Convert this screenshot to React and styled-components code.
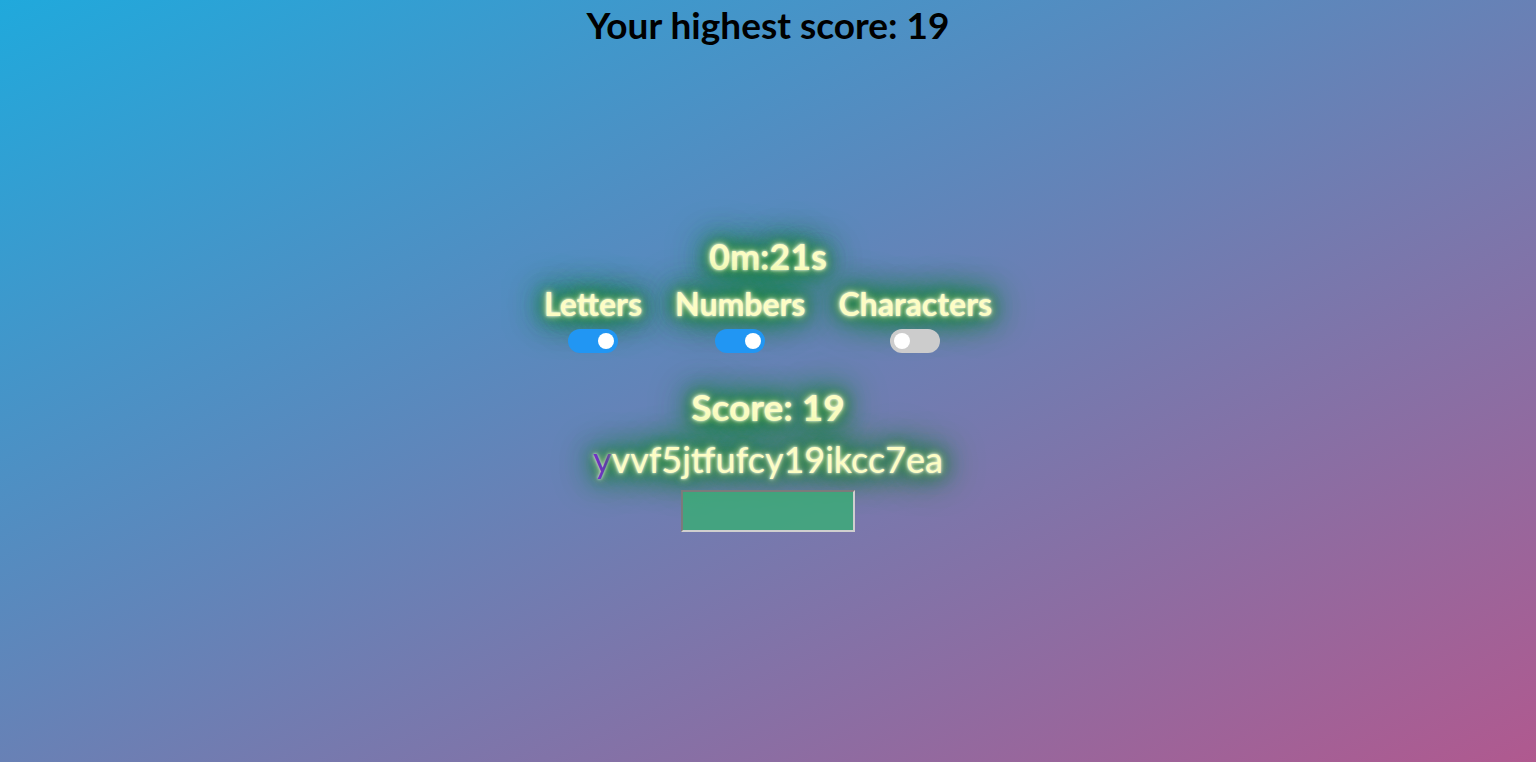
import React, { useState } from "react";
import styled, { createGlobalStyle } from "styled-components";

const GlobalStyle = createGlobalStyle`
  html, body {
    margin: 0;
    padding: 0;
    height: 100%;
  }
  body {
    font-family: "Lato", "Open Sans", sans-serif;
  }
`;

const Page = styled.div`
  width: 100%;
  height: 762px;
  background: linear-gradient(to bottom right, #20a9dc, #b0598f);
  display: flex;
  flex-direction: column;
  align-items: center;
  overflow: hidden;
`;

const Highest = styled.h1`
  margin: 5px 0 0;
  font-size: 37px;
  line-height: 40px;
  font-weight: 700;
  color: #000;
`;

const Game = styled.div`
  margin-top: 191px;
  display: flex;
  flex-direction: column;
  align-items: center;
`;

// neon look: white core, green halo
const glow = `
  color: #fdfdc4;
  text-shadow: 0 0 3px #fff, 0 0 7px #f6f6a8, 0 0 14px #17802f, 0 0 20px #17802f,
    0 0 26px #17802f, 0 0 34px #17802f, 0 0 44px #17802f;
`;

const Timer = styled.div`
  ${glow}
  font-size: 36px;
  font-weight: 700;
  line-height: 40px;
`;

const Toggles = styled.div`
  display: flex;
  gap: 33px;
  margin-top: 10px;
`;

const Option = styled.label`
  display: flex;
  flex-direction: column;
  align-items: center;
  gap: 7px;
  cursor: pointer;
`;

const OptionName = styled.span`
  ${glow}
  font-size: 32px;
  font-weight: 700;
  line-height: 36px;
`;

const Track = styled.span`
  width: 50px;
  height: 24px;
  border-radius: 12px;
  background: ${(p) => (p.$on ? "#2196f3" : "#cccccc")};
  display: flex;
  align-items: center;
  justify-content: ${(p) => (p.$on ? "flex-end" : "flex-start")};
  padding: 0 4px;
  box-sizing: border-box;
`;

const Knob = styled.span`
  width: 16px;
  height: 16px;
  border-radius: 50%;
  background: #fff;
`;

const Score = styled.div`
  ${glow}
  margin-top: 33px;
  font-size: 37px;
  font-weight: 700;
  line-height: 42px;
`;

const Word = styled.div`
  ${glow}
  margin-top: 9px;
  font-size: 36px;
  line-height: 44px;
`;

const Current = styled.span`
  color: #7a2fd0;
`;

const Answer = styled.input`
  margin-top: 9px;
  width: 174px;
  height: 42px;
  box-sizing: border-box;
  background: rgba(60, 170, 120, 0.85);
  border: 2px inset #cfcfcf;
  outline: none;
  font-size: 22px;
  color: #fff;
`;

function Switch({ name, on, onToggle }) {
  return (
    <Option onClick={onToggle}>
      <OptionName>{name}</OptionName>
      <Track $on={on}>
        <Knob />
      </Track>
    </Option>
  );
}

export default function App() {
  const [opts, setOpts] = useState({ Letters: true, Numbers: true, Characters: false });
  const word = "yvvf5jtfufcy19ikcc7ea";

  const toggle = (k) => setOpts({ ...opts, [k]: !opts[k] });

  return (
    <Page>
      <GlobalStyle />
      <Highest>Your highest score: 19</Highest>
      <Game>
        <Timer>0m:21s</Timer>
        <Toggles>
          {Object.keys(opts).map((k) => (
            <Switch key={k} name={k} on={opts[k]} onToggle={() => toggle(k)} />
          ))}
        </Toggles>
        <Score>Score: 19</Score>
        <Word>
          <Current>{word[0]}</Current>
          {word.slice(1)}
        </Word>
        <Answer type="text" />
      </Game>
    </Page>
  );
}
